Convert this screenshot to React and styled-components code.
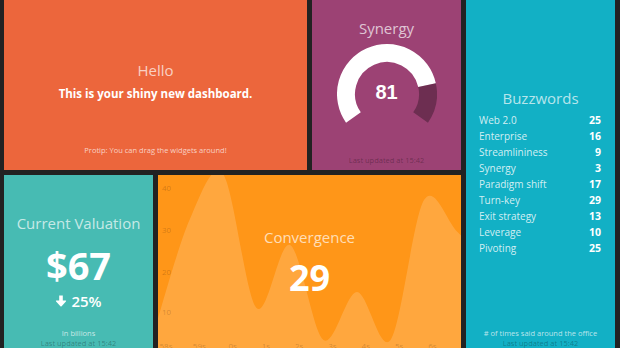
import React from 'react';
import styled, { createGlobalStyle } from 'styled-components';

const GlobalStyle = createGlobalStyle`
  html, body { margin: 0; padding: 0; background: #222; overflow: hidden; }
  body {
    font-family: "Open Sans", "Noto Sans", sans-serif;
    -webkit-font-smoothing: antialiased;
  }
`;

const Board = styled.main`
  display: grid;
  grid-template-columns: repeat(4, 149px);
  grid-template-rows: repeat(2, 178px);
  gap: 5px;
  padding-left: 4px;
  margin-top: -8px;
`;

const Widget = styled.section`
  grid-column: ${p => p.$col};
  grid-row: ${p => p.$row};
  background: ${p => p.$bg};
  display: grid;
  grid-template-areas: "stack";
  overflow: hidden;
  text-align: center;
  color: #fff;
  & > * { grid-area: stack; min-width: 0; }
`;

const Body = styled.div`
  align-self: center;
  display: flex;
  flex-direction: column;
  align-items: center;
  position: relative;
  padding-bottom: ${p => p.$lift || 0}px;
`;

const Footer = styled.footer`
  align-self: end;
  padding-bottom: 5px;
  font-size: 7.5px;
  line-height: 10px;
`;

const MoreInfo = styled.p`
  margin: 0;
  color: rgba(255, 255, 255, 0.7);
`;

const UpdatedAt = styled.p`
  margin: 0;
  min-height: 10px;
  color: rgba(0, 0, 0, 0.3);
`;

const Title = styled.h1`
  margin: 0 0 ${p => p.$gap || 0}px;
  font-size: 15px;
  line-height: 18px;
  font-weight: 400;
  color: rgba(255, 255, 255, 0.7);
`;

const Lead = styled.h3`
  margin: 0;
  font-size: 11.5px;
  line-height: 14px;
  font-weight: 700;
  color: #fff;
`;

const GaugeBox = styled.div`
  width: 100px;
  height: 100px;
  display: grid;
  grid-template-areas: "g";
  place-items: center;
  & > * { grid-area: g; }
`;

const GaugeValue = styled.span`
  font-family: "Liberation Sans", Arial, sans-serif;
  font-weight: 700;
  font-size: 20px;
  line-height: 20px;
  color: #fff;
  margin-top: -3px;
`;

const List = styled.ul`
  align-self: stretch;
  margin: 0;
  padding: 0 14px 0 13px;
  list-style: none;
`;

const Item = styled.li`
  display: flex;
  justify-content: space-between;
  align-items: baseline;
  line-height: 16px;
`;

const ItemLabel = styled.span`
  font-size: 10px;
  color: rgba(255, 255, 255, 0.82);
`;

const ItemValue = styled.span`
  font-size: 10.5px;
  font-weight: 700;
  color: #fff;
`;

const BigValue = styled.div`
  font-size: ${p => p.$size}px;
  line-height: ${p => p.$size}px;
  font-weight: 700;
  color: #fff;
  margin-bottom: ${p => p.$gap || 0}px;
`;

const Change = styled.div`
  display: flex;
  align-items: center;
  gap: 4px;
  font-size: 15px;
  line-height: 18px;
  font-weight: 600;
  color: #fff;
`;

const ArrowIcon = styled.svg`
  width: 12px;
  height: 12px;
  display: block;
`;

const ChartSvg = styled.svg`
  display: block;
  width: 100%;
  height: 100%;
`;

const AxisText = styled.text`
  font-family: "Open Sans", sans-serif;
  font-size: 8px;
  fill: rgba(0, 0, 0, 0.2);
`;

const buzzwords = [
  ['Web 2.0', 25], ['Enterprise', 16], ['Streamlininess', 9], ['Synergy', 3],
  ['Paradigm shift', 17], ['Turn-key', 29], ['Exit strategy', 13], ['Leverage', 10], ['Pivoting', 25],
];

const polar = (cx, cy, r, deg) => {
  const a = (deg * Math.PI) / 180;
  return [cx + r * Math.sin(a), cy - r * Math.cos(a)];
};
const arc = (cx, cy, r, a0, a1) => {
  const [x0, y0] = polar(cx, cy, r, a0);
  const [x1, y1] = polar(cx, cy, r, a1);
  const large = a1 - a0 > 180 ? 1 : 0;
  return `M${x0},${y0} A${r},${r} 0 ${large} 1 ${x1},${y1}`;
};

function Gauge({ value }) {
  const start = -125, span = 250;
  const mid = start + (value / 100) * span;
  return (
    <GaugeBox>
      <svg width="100" height="100" viewBox="0 0 100 100">
        <path d={arc(50, 50, 41, start, mid)} fill="none" stroke="#fff" strokeWidth="18" />
        <path d={arc(50, 50, 41, mid, start + span)} fill="none" stroke="rgba(0,0,0,0.3)" strokeWidth="18" />
      </svg>
      <GaugeValue>{value}</GaugeValue>
    </GaugeBox>
  );
}

function ArrowDown() {
  return (
    <ArrowIcon viewBox="0 0 12 12">
      <path
        d="M4.2 0.6 H7.8 V5.6 H10.6 Q11.6 5.6 10.9 6.4 L6.6 11.2 Q6 11.8 5.4 11.2 L1.1 6.4 Q0.4 5.6 1.4 5.6 H4.2 Z"
        fill="#fff"
      />
    </ArrowIcon>
  );
}

const points = [
  [-2, 150], [31.5, 45], [65, -1], [98.5, 133], [132, 70], [165.5, 165],
  [199, 117], [232.5, 165], [266, 25], [299.5, 57], [333, 90],
];

function smooth(pts, k = 0.16) {
  let d = `M${pts[0][0]},${pts[0][1]}`;
  for (let i = 0; i < pts.length - 1; i++) {
    const p0 = pts[i - 1] || pts[i];
    const p1 = pts[i];
    const p2 = pts[i + 1];
    const p3 = pts[i + 2] || p2;
    const c1 = [p1[0] + (p2[0] - p0[0]) * k, p1[1] + (p2[1] - p0[1]) * k];
    const c2 = [p2[0] - (p3[0] - p1[0]) * k, p2[1] - (p3[1] - p1[1]) * k];
    d += ` C${c1[0]},${c1[1]} ${c2[0]},${c2[1]} ${p2[0]},${p2[1]}`;
  }
  return d;
}

const xTicks = ['58s', '59s', '0s', '1s', '2s', '3s', '4s', '5s', '6s'];
const yTicks = [[40, 13], [30, 55], [20, 97], [10, 137]];

function Chart() {
  const area = `${smooth(points)} L333,178 L-2,178 Z`;
  return (
    <ChartSvg viewBox="0 0 303 178" preserveAspectRatio="none">
      <path d={area} fill="rgba(255,255,255,0.17)" />
      {yTicks.map(([v, y]) => (
        <AxisText key={v} x="4" y={y + 3}>{v}</AxisText>
      ))}
      {xTicks.map((t, i) => (
        <AxisText key={t} x={8 + 33.3 * i} y="174" textAnchor="middle">{t}</AxisText>
      ))}
    </ChartSvg>
  );
}

export default function App() {
  return (
    <>
      <GlobalStyle />
      <Board>
        <Widget $col="1 / span 2" $row="1" $bg="#ec663c">
          <Body>
            <Title $gap={8}>Hello</Title>
            <Lead>This is your shiny new dashboard.</Lead>
          </Body>
          <Footer>
            <MoreInfo>Protip: You can drag the widgets around!</MoreInfo>
            <UpdatedAt />
          </Footer>
        </Widget>

        <Widget $col="3" $row="1" $bg="#9c4274">
          <Body>
            <Title $gap={7}>Synergy</Title>
            <Gauge value={81} />
          </Body>
          <Footer>
            <UpdatedAt>Last updated at 15:42</UpdatedAt>
          </Footer>
        </Widget>

        <Widget $col="4" $row="1 / span 2" $bg="#12b0c5">
          <Body>
            <Title $gap={5}>Buzzwords</Title>
            <List>
              {buzzwords.map(([label, value]) => (
                <Item key={label}>
                  <ItemLabel>{label}</ItemLabel>
                  <ItemValue>{value}</ItemValue>
                </Item>
              ))}
            </List>
          </Body>
          <Footer>
            <MoreInfo># of times said around the office</MoreInfo>
            <UpdatedAt>Last updated at 15:42</UpdatedAt>
          </Footer>
        </Widget>

        <Widget $col="1" $row="2" $bg="#47bbb3">
          <Body $lift={4}>
            <Title $gap={14}>Current Valuation</Title>
            <BigValue $size={38} $gap={8}>$67</BigValue>
            <Change><ArrowDown />25%</Change>
          </Body>
          <Footer>
            <MoreInfo>In billions</MoreInfo>
            <UpdatedAt>Last updated at 15:42</UpdatedAt>
          </Footer>
        </Widget>

        <Widget $col="2 / span 2" $row="2" $bg="#ff9618">
          <Chart />
          <Body $lift={5}>
            <Title $gap={14}>Convergence</Title>
            <BigValue $size={36}>29</BigValue>
          </Body>
        </Widget>
      </Board>
    </>
  );
}
